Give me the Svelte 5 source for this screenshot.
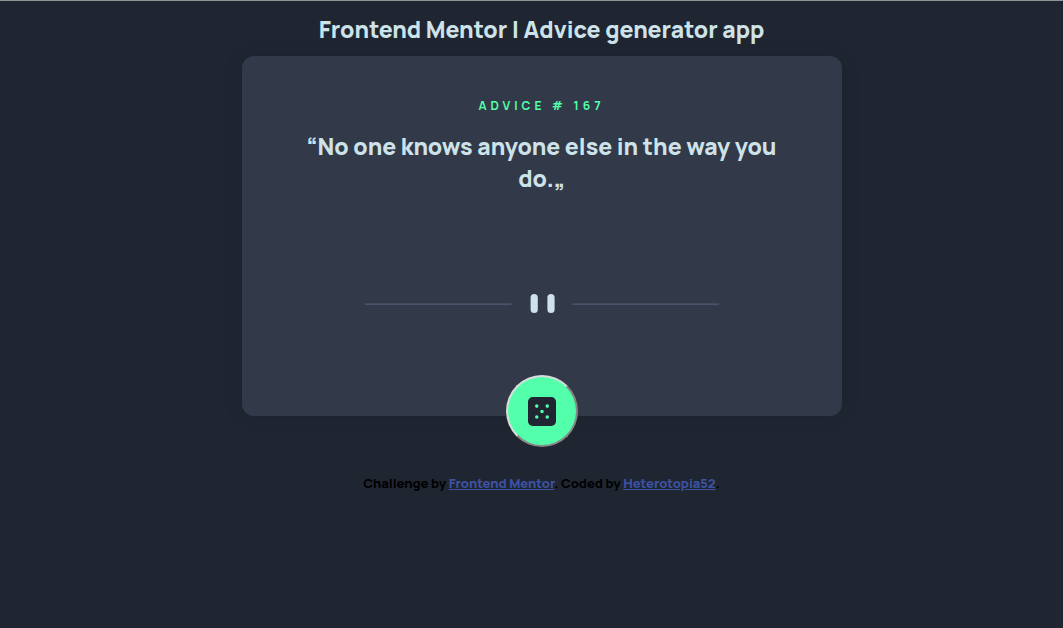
<script>
  const advice = { id: 167, text: 'No one knows anyone else in the way you do.' };
</script>

<main>
  <h1>Frontend Mentor | Advice generator app</h1>
  <section class="card">
    <p class="label">ADVICE # {advice.id}</p>
    <blockquote>“{advice.text}„</blockquote>
    <svg class="divider" viewBox="0 0 295 16" preserveAspectRatio="none" aria-hidden="true">
      <path fill="#4f5d74" d="M0 8h122v1H0zM173 8h122v1H173z" />
      <g transform="translate(138)" fill="#cee3e9">
        <rect width="6" height="16" rx="3" />
        <rect x="14" width="6" height="16" rx="3" />
      </g>
    </svg>
    <button type="button" aria-label="New advice">
      <svg viewBox="0 0 24 24" preserveAspectRatio="none" aria-hidden="true">
        <rect width="24" height="24" rx="4" fill="#1f2632" />
        <g fill="#53ffaa">
          <circle cx="7.5" cy="7.5" r="1.5" />
          <circle cx="16.5" cy="7.5" r="1.5" />
          <circle cx="12" cy="12" r="1.5" />
          <circle cx="7.5" cy="16.5" r="1.5" />
          <circle cx="16.5" cy="16.5" r="1.5" />
        </g>
      </svg>
    </button>
  </section>
  <footer>
    Challenge by <a href="#frontend-mentor">Frontend Mentor</a>. Coded by <a href="#author">Heterotopia52</a>.
  </footer>
</main>

<style>
  :global(body) {
    background: #1f2632;
  }

  main {
    box-sizing: border-box;
    min-height: 100vh;
    display: flex;
    flex-direction: column;
    align-items: center;
    padding: 12px 0 0 20px;
    border-top: 1px solid #909293;
    font-family: Manrope, Inter, sans-serif;
    font-weight: 800;
  }

  h1,
  blockquote {
    margin: 0;
    color: #cee3e9;
    font-size: 23px;
    font-weight: 800;
    line-height: 32px;
    text-align: center;
  }

  .card {
    box-sizing: border-box;
    width: 100%;
    max-width: 600px;
    min-height: 360px;
    margin-top: 11px;
    padding: 41px 60px 0;
    display: flex;
    flex-direction: column;
    align-items: center;
    border-radius: 12px;
    background: #323a49;
    box-shadow: 0 0 20px rgba(0, 0, 0, 0.1);
  }

  .label {
    margin: 0 0 15px;
    color: #53ffaa;
    font-size: 12px;
    font-weight: 700;
    line-height: 18px;
    letter-spacing: 4px;
  }

  blockquote {
    min-height: 164px;
  }

  .divider {
    width: 354px;
    max-width: 100%;
    height: 19px;
    flex: none;
  }

  button {
    box-sizing: border-box;
    width: 72px;
    height: 72px;
    margin: auto 0 -31px;
    padding: 0;
    display: grid;
    place-items: center;
    border: 2px outset #dcdcdc;
    border-radius: 50%;
    background: #53ffaa;
    cursor: pointer;
  }

  button svg {
    width: 28px;
    height: 29px;
  }

  footer {
    margin-top: 58px;
    color: #000;
    font-size: 13px;
    line-height: 18px;
    text-align: center;
  }

  a {
    color: #3e52a3;
  }
</style>
